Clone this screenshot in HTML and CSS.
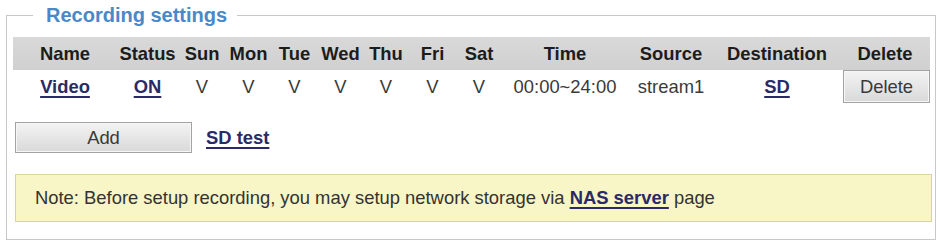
FILE: index.html
```html
<!DOCTYPE html>
<html>
<head>
<meta charset="utf-8">
<title>Recording settings</title>
<link rel="stylesheet" href="styles.css">
</head>
<body>
<fieldset class="panel">
  <legend class="panel-title">Recording settings</legend>
  <table class="rec-table">
    <colgroup>
      <col class="c-name"><col class="c-status"><col class="c-sun"><col class="c-mon"><col class="c-tue"><col class="c-wed"><col class="c-thu"><col class="c-fri"><col class="c-sat"><col class="c-time"><col class="c-source"><col class="c-dest"><col class="c-del">
    </colgroup>
    <thead>
      <tr class="head-row">
        <th>Name</th><th>Status</th><th>Sun</th><th>Mon</th><th>Tue</th><th>Wed</th><th>Thu</th><th>Fri</th><th>Sat</th><th>Time</th><th>Source</th><th>Destination</th><th>Delete</th>
      </tr>
    </thead>
    <tbody>
      <tr class="data-row">
        <td><a class="link" href="#">Video</a></td>
        <td><a class="link" href="#">ON</a></td>
        <td>V</td><td>V</td><td>V</td><td>V</td><td>V</td><td>V</td><td>V</td>
        <td>00:00~24:00</td>
        <td>stream1</td>
        <td><a class="link" href="#">SD</a></td>
        <td class="del-cell"><button class="btn btn-del" type="button">Delete</button></td>
      </tr>
    </tbody>
  </table>
  <div class="actions">
    <button class="btn btn-add" type="button">Add</button>
    <a class="link" href="#">SD test</a>
  </div>
  <div class="note">Note: Before setup recording, you may setup network storage via <a class="link" href="#">NAS server</a> page</div>
</fieldset>
</body>
</html>
```
FILE: styles.css
```css
html, body {
  margin: 0;
  padding: 0;
  background: #ffffff;
}
body {
  font-family: "Liberation Sans", Arial, sans-serif;
  font-size: 18.4px;
  color: #333333;
  width: 940px;
  height: 243px;
  overflow: hidden;
}
.panel {
  margin: 5px 0 0 6px;
  width: 916px;
  padding: 0 4px 17px 8px;
  border: 1px solid #c8c8c8;
  box-sizing: content-box;
  min-width: 0;
}
.panel-title {
  margin-left: 18px;
  padding: 0 10px 0 13px;
  font-size: 20px;
  line-height: 20px;
  font-weight: bold;
  color: #4a88c8;
}
.rec-table {
  margin: 12px 0 0 -2px;
  width: 917px;
  table-layout: fixed;
  border-collapse: collapse;
  border-spacing: 0;
}
.c-name { width: 104px; }
.c-status { width: 61px; }
.c-sun { width: 48px; }
.c-mon { width: 45px; }
.c-tue { width: 47px; }
.c-wed { width: 45px; }
.c-thu { width: 46px; }
.c-fri { width: 47px; }
.c-sat { width: 46px; }
.c-time { width: 126px; }
.c-source { width: 86px; }
.c-dest { width: 126px; }
.c-del { width: 90px; }
.rec-table th,
.rec-table td {
  padding: 0;
  text-align: center;
  white-space: nowrap;
}
.head-row th {
  height: 33px;
  background: linear-gradient(#d9d9d9, #d0d0d0);
  font-weight: bold;
  color: #1c1c1c;
}
.data-row td {
  height: 34px;
  color: #3a3a3a;
}
.del-cell {
  text-align: right;
  vertical-align: top;
}
.link {
  color: #2a2a66;
  font-weight: bold;
  text-decoration: underline;
  text-decoration-thickness: 2px;
  text-underline-offset: 3px;
}
.btn {
  font-family: "Liberation Sans", Arial, sans-serif;
  font-size: 18.4px;
  color: #3a3a3a;
  background: linear-gradient(#f3f3f3, #d9d9d9);
  border: 1px solid #a3a3a3;
  box-shadow: inset 0 0 0 1px #f6f6f6;
  padding: 0;
  margin: 0;
}
.btn-del {
  width: 87px;
  height: 33px;
  display: block;
  margin-left: auto;
}
.actions {
  margin-top: 18px;
  display: flex;
  align-items: center;
  gap: 14px;
}
.btn-add {
  width: 177px;
  height: 31px;
}
.note {
  margin-top: 21px;
  margin-right: -1px;
  padding: 0 0 0 19px;
  line-height: 46px;
  white-space: nowrap;
  background: #f8f5c6;
  border: 1px solid #d7d49d;
  color: #333333;
}
```
